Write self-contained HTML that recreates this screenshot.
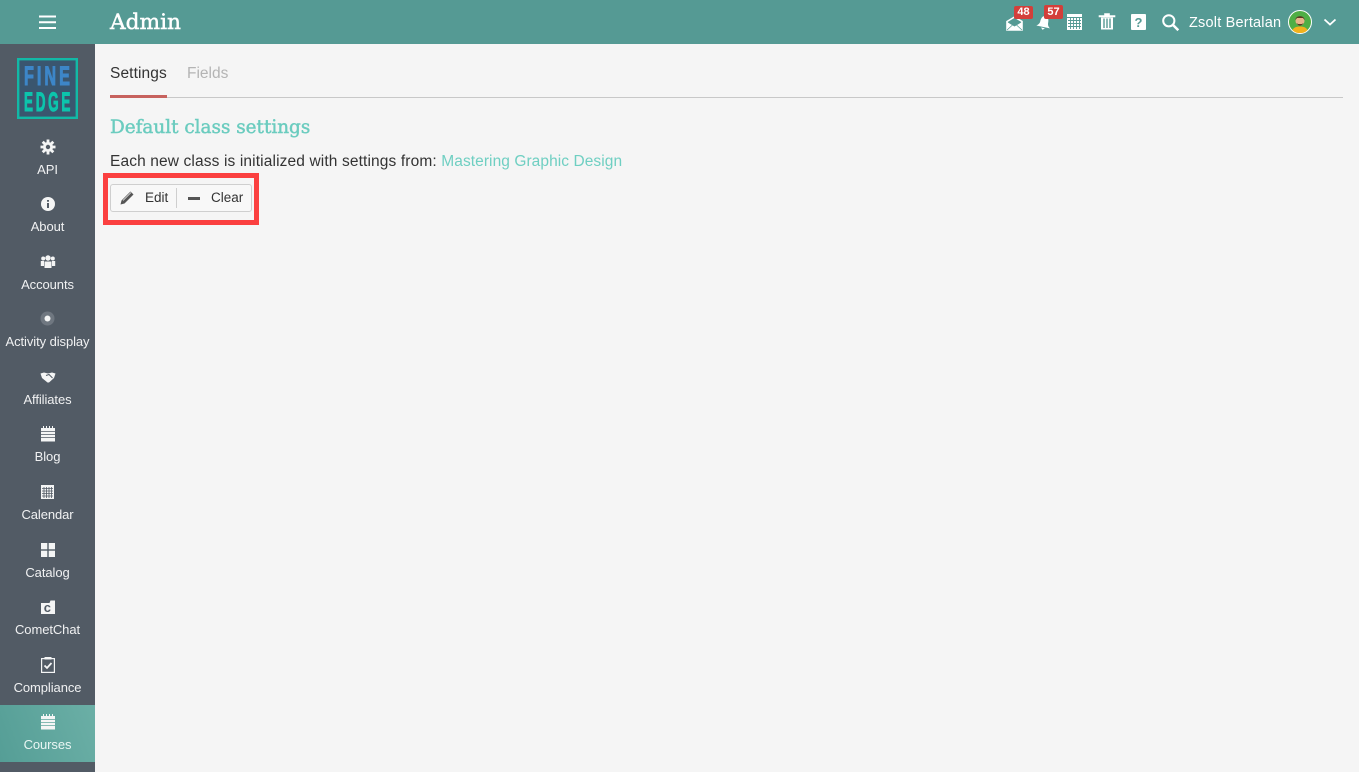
<!DOCTYPE html>
<html><head><meta charset="utf-8"><style>
html,body{margin:0;padding:0;width:1359px;height:772px;overflow:hidden;background:#f5f5f5;font-family:"Liberation Sans",sans-serif}
.a{position:absolute;white-space:nowrap}
#top{left:0;top:0;width:1359px;height:44px;background:#559a94}
#side{left:0;top:44px;width:95px;height:728px;background:#525b65}
#act{left:0;top:705px;width:95px;height:57px;background:linear-gradient(70deg,#559e96,#6bafa6)}
.l{left:0;width:95px;text-align:center;color:#f0f1f2;font-size:13px;letter-spacing:-.08px;line-height:16px}
svg{position:absolute;overflow:visible}
.b{background:#d33f3a;color:#fff;font-size:11px;font-weight:bold;text-align:center;line-height:14px;height:14px;border-radius:2px}
</style></head><body>
<div class="a" id="top"></div><div class="a" id="side"></div><div class="a" id="act"></div>

<svg style="left:39px;top:15px" width="18" height="15"><path d="M0 1.500H17M0 7.200H17M0 13H17" stroke="#fff" stroke-width="2"/></svg>
<div class="a" style="left:110px;top:9px;font:21.700px/28px 'DejaVu Serif',serif;color:#fff;-webkit-text-stroke:.45px #fff">Admin</div>

<svg style="left:17px;top:58px" width="61" height="61"><rect x="1.200" y="1.200" width="58.600" height="58.600" fill="#3a566f" stroke="#12b9a6" stroke-width="2.400"/>
<text transform="translate(7,27) scale(.6,1)" letter-spacing="5" font-family="Liberation Sans" font-size="27" font-weight="bold" fill="#3d86c8" stroke="#3d86c8" stroke-width="1.100">FINE</text>
<text transform="translate(7,53) scale(.5,1)" letter-spacing="5.400" font-family="Liberation Sans" font-size="27" font-weight="bold" fill="#0cc4ac" stroke="#0cc4ac" stroke-width="1.100">EDGE</text></svg>

<svg style="left:40px;top:139px" width="16" height="16" viewBox="0 0 16 16"><path d="M8 .5V15.500M.5 8H15.500M2.700 2.700L13.300 13.300M13.300 2.700L2.700 13.300" stroke="#f4f5f5" stroke-width="2.800"/><circle cx="8" cy="8" r="5" fill="#f4f5f5"/><circle cx="8" cy="8" r="2.200" fill="#525b65"/></svg>
<div class="a l" style="top:162px">API</div>

<svg style="left:41px;top:197px" width="14" height="14"><circle cx="7" cy="7" r="7" fill="#f4f5f5"/><path d="M7 3V4.800M7 6V11" stroke="#525b65" stroke-width="2"/></svg>
<div class="a l" style="top:219px">About</div>

<svg style="left:40px;top:254px" width="16" height="15" viewBox="0 0 16 15" fill="#f4f5f5"><circle cx="8" cy="4" r="2.700"/><circle cx="3.200" cy="4.500" r="2"/><circle cx="12.800" cy="4.500" r="2"/><path d="M4.500 7.500H11.500V14H4.500ZM.8 7H4V12H.8ZM12 7H15.200V12H12Z"/></svg>
<div class="a l" style="top:277px">Accounts</div>

<svg style="left:40px;top:311px" width="15" height="15"><circle cx="7.500" cy="7.500" r="7" fill="#6f7780"/><circle cx="7.500" cy="7.500" r="3" fill="#f4f5f5"/></svg>
<div class="a l" style="top:334px">Activity display</div>

<svg style="left:40px;top:372px" width="16" height="11" viewBox="0 0 16 11"><path d="M0.500 1.500L4 0.500L8 1.500L12 0.500L15.500 1.500L14 6L9 10.500H7.500L2 6Z" fill="#f4f5f5"/><path d="M6 3.500L9 2.500L12.500 6" stroke="#525b65" fill="none"/></svg>
<div class="a l" style="top:392px">Affiliates</div>

<svg style="left:41px;top:426px" width="14" height="16" viewBox="0 0 14 16"><path d="M0 2H14V15.500H0Z" fill="#f4f5f5"/><path d="M0 5.500H14M0 8.500H14M0 11.500H14" stroke="#525b65" stroke-width=".8"/><path d="M2.500 0V2M5.500 0V2M8.500 0V2M11.500 0V2" stroke="#f4f5f5"/></svg>
<div class="a l" style="top:449px">Blog</div>

<svg style="left:41px;top:485px" width="13" height="14" viewBox="0 0 13 14"><rect width="13" height="14" fill="#f4f5f5"/><path d="M3 2V13M5.500 2V13M8 2V13M10.500 2V13M1 3.500H12M1 6H12M1 8.500H12M1 11H12" stroke="#525b65" stroke-width=".8"/></svg>
<div class="a l" style="top:507px">Calendar</div>

<svg style="left:41px;top:543px" width="14" height="14" fill="#f4f5f5"><rect width="6.300" height="6.300"/><rect x="7.700" width="6.300" height="6.300"/><rect y="7.700" width="6.300" height="6.300"/><rect x="7.700" y="7.700" width="6.300" height="6.300"/></svg>
<div class="a l" style="top:565px">Catalog</div>

<svg style="left:41px;top:600px" width="14" height="14"><path d="M0 3H8.500L9.500 0.500H14V14H0Z" fill="#f4f5f5"/><text x="2.800" y="12" font-family="Liberation Sans" font-size="13" font-weight="bold" fill="#525b65">c</text></svg>
<div class="a l" style="top:622px">CometChat</div>

<svg style="left:41px;top:657px" width="14" height="16" viewBox="0 0 14 16"><rect x=".6" y="1.600" width="12.800" height="13.800" fill="none" stroke="#f4f5f5" stroke-width="1.200"/><rect x="3.500" y="0" width="7" height="2.500" fill="#f4f5f5"/><path d="M3.500 8.500L6 11L10.500 6" fill="none" stroke="#f4f5f5" stroke-width="1.800"/></svg>
<div class="a l" style="top:680px">Compliance</div>

<svg style="left:41px;top:714px" width="14" height="16" viewBox="0 0 14 16"><path d="M0 2H14V15.500H0Z" fill="#f4f5f5"/><path d="M0 5.500H14M0 8.500H14M0 11.500H14" stroke="#62a79f" stroke-width=".8"/><path d="M2.500 0V2M5.500 0V2M8.500 0V2M11.500 0V2" stroke="#f4f5f5"/></svg>
<div class="a l" style="top:737px;color:#e9f6f3">Courses</div>

<!-- top right -->
<svg style="left:1006px;top:16px" width="17" height="15" viewBox="0 0 17 15"><path d="M1 5.500L8.500 1L16 5.500V14H1Z" fill="none" stroke="#fff" stroke-width="1.600"/><path d="M1 6L8.500 10.500L16 6V14H1Z" fill="#fff"/><path d="M1 14L6.500 9M16 14L10.500 9" stroke="#559a94" stroke-width=".7"/></svg>
<div class="a b" style="left:1014px;top:6px;width:19px;height:13px;line-height:13px">48</div>
<svg style="left:1036px;top:15px" width="16" height="15" viewBox="0 0 16 15"><g transform="rotate(12 8 8)"><path d="M8 1C11 1 12 4 12 7C12 9.500 13.500 11 15 12H1C2.500 11 4 9.500 4 7C4 4 5 1 8 1Z" fill="#fff"/><path d="M6 13H10L8 15Z" fill="#fff"/></g></svg>
<div class="a b" style="left:1044px;top:5px;width:19px">57</div>
<svg style="left:1067px;top:14px" width="15" height="16" viewBox="0 0 15 16"><rect width="15" height="16" fill="#fff"/><path d="M0 3.500H15M3.500 3.500V15M6.500 3.500V15M9.500 3.500V15M12.500 3.500V15M1 6.500H14M1 9.500H14M1 12.500H14" stroke="#559a94" stroke-width=".9"/></svg>
<svg style="left:1099px;top:13px" width="16" height="17" viewBox="0 0 16 17"><path d="M0 2.500H16V4H0ZM5.500 2.500V0.500H10.500V2.500" fill="#fff" stroke="#fff" stroke-width=".6"/><path d="M2 4.500H14V16.500H2Z" fill="#fff"/><path d="M5 5.500V15M8 5.500V15M11 5.500V15" stroke="#559a94" stroke-width="1.400"/></svg>
<svg style="left:1131px;top:14px" width="15" height="16"><rect width="15" height="16" rx="1" fill="#fff"/><text x="7.500" y="13" text-anchor="middle" font-family="Liberation Sans" font-size="13" font-weight="bold" fill="#559a94">?</text></svg>
<svg style="left:1162px;top:14px" width="17" height="17"><circle cx="6.800" cy="6.800" r="5.600" fill="none" stroke="#fff" stroke-width="2"/><path d="M10.800 10.800L16.300 16.300" stroke="#fff" stroke-width="2.500"/></svg>
<div class="a" style="left:1189px;top:14px;font-size:14.500px;line-height:18px;color:#fff;letter-spacing:.2px">Zsolt Bertalan</div>
<svg style="left:1288px;top:10px" width="24" height="24" viewBox="0 0 24 24"><circle cx="12" cy="12" r="11.500" fill="#4fae45" stroke="#fff" stroke-width="1"/><path d="M4.500 20C6 17 9 16.500 12 16.500C15 16.500 18 17 19.500 20C17.500 22.500 15 23 12 23C9 23 6.500 22.500 4.500 20Z" fill="#f2b21c"/><circle cx="12" cy="11" r="4.500" fill="#e6b48a"/><path d="M7.500 10C7 5 17 5 16.500 10L15 8H9Z" fill="#5a3a22"/><path d="M8.500 13C10 16.500 14 16.500 15.500 13L14 14H10Z" fill="#5a3a22"/></svg>
<svg style="left:1323px;top:18px" width="14" height="9"><path d="M1.500 1.500L7 6.500L12.500 1.500" fill="none" stroke="#fff" stroke-width="1.800"/></svg>

<!-- content -->
<div class="a" style="left:110px;top:64px;font-size:15.500px;line-height:19px;color:#333;letter-spacing:.1px">Settings</div>
<div class="a" style="left:187px;top:64px;font-size:15.500px;line-height:19px;color:#b4b4b4">Fields</div>
<div class="a" style="left:110px;top:97px;width:1233px;height:1px;background:#c8c8c8"></div>
<div class="a" style="left:110px;top:95px;width:57px;height:3px;background:#c7625e"></div>
<div class="a" style="left:110px;top:116px;font:18.400px/24px 'DejaVu Serif',serif;color:#6bccbf;-webkit-text-stroke:.45px #6bccbf">Default class settings</div>
<div class="a" style="left:110px;top:152px;font-size:15.500px;line-height:19px;color:#333;letter-spacing:.13px">Each new class is initialized with settings from: <span style="color:#6fcfc2;letter-spacing:.07px">Mastering Graphic Design</span></div>

<div class="a" style="left:103px;top:173px;width:146px;height:42px;border:5px solid #fb4040"></div>
<div class="a" style="left:110px;top:184px;width:140px;height:26px;border:1px solid #cfcfcf;border-radius:3px;background:#f8f8f8"></div>
<div class="a" style="left:176px;top:188px;width:1px;height:20px;background:#cfcfcf"></div>
<svg style="left:120px;top:190px" width="15" height="15" viewBox="0 0 15 15"><path d="M0.500 14.500L1.500 10.500L10.500 1.500L13.500 4.500L4.500 13.500Z" fill="#555"/><path d="M3 10.500L11 2.500" stroke="#f8f8f8" stroke-width=".7"/></svg>
<div class="a" style="left:145px;top:190px;font-size:13.500px;line-height:16px;color:#333">Edit</div>
<div class="a" style="left:188px;top:197px;width:12px;height:3px;background:#555"></div>
<div class="a" style="left:211px;top:190px;font-size:13.500px;line-height:16px;color:#333">Clear</div>
</body></html>
